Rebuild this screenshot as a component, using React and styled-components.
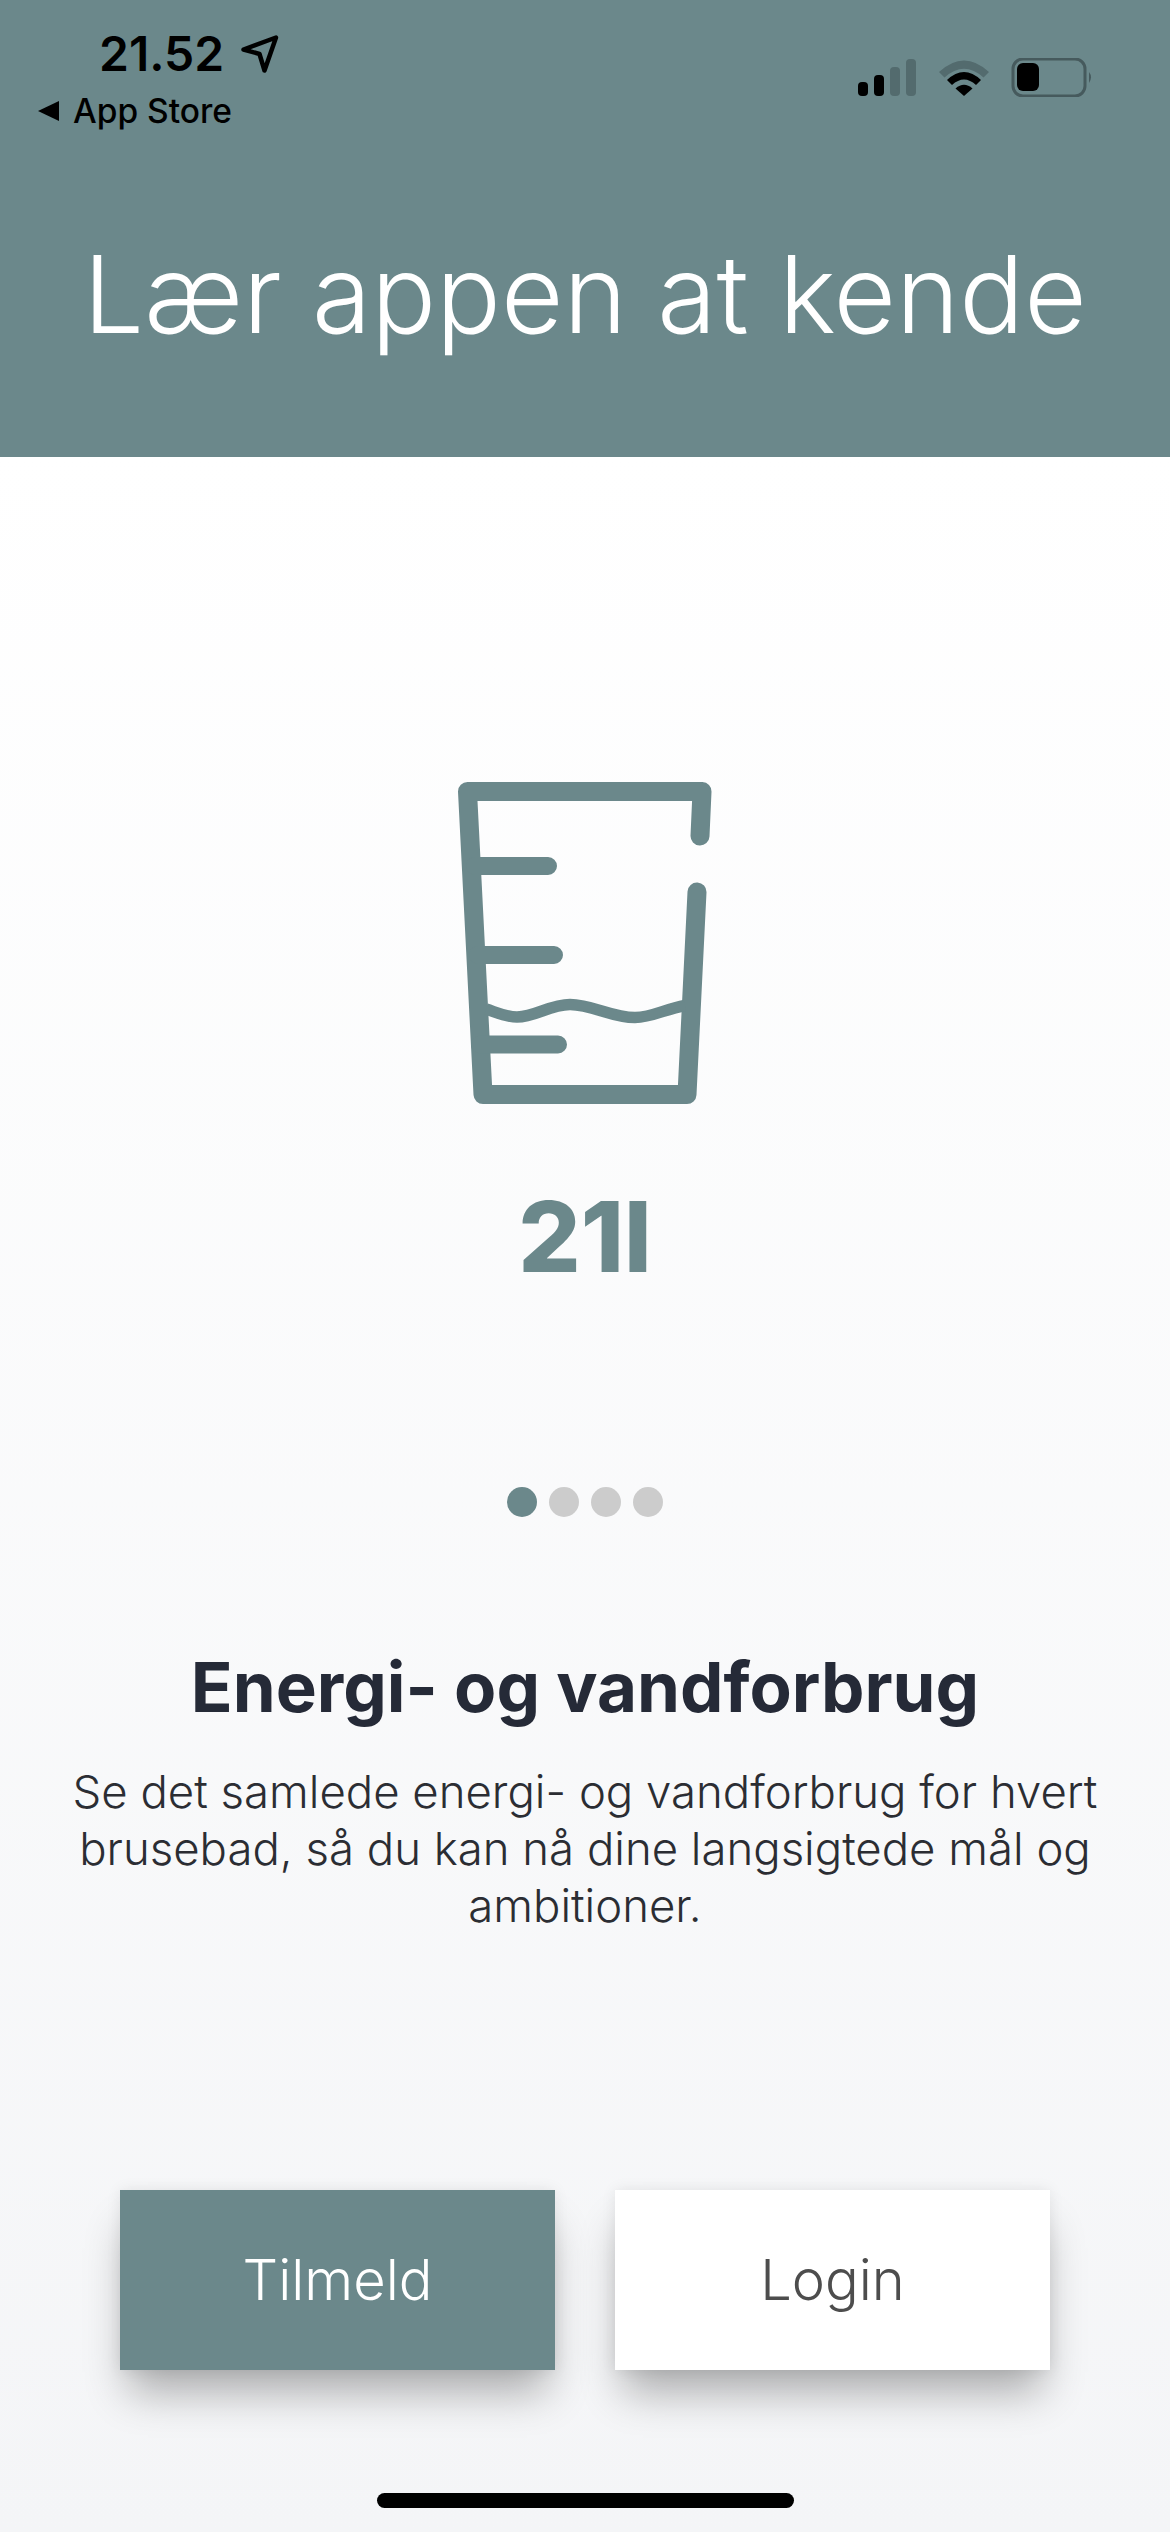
import React from "react";
import styled, { createGlobalStyle } from "styled-components";

const TEAL = "#6b888b";

const GlobalStyle = createGlobalStyle`
  html, body {
    margin: 0;
    padding: 0;
  }
  body {
    font-family: "Inter", "Liberation Sans", sans-serif;
    background: #f4f5f7;
  }
`;

const DOTS = [true, false, false, false];

export default function App() {
    return (
        <>
            <GlobalStyle />
            <Page>
                <Header>
                    <StatusBar>
                        <StatusLeft>
                            <TimeRow>
                                <Time>21.52</Time>
                                <LocationIcon viewBox="0 0 38 38">
                                    <path d="M2.5 14.5 L35 2.5 L23.5 35.5 L18.5 19 Z" fill="none" stroke="#000" strokeWidth="4.5" strokeLinejoin="round" />
                                </LocationIcon>
                            </TimeRow>
                            <BackRow>
                                <BackArrow viewBox="0 0 21 20">
                                    <path d="M0 10 L21 0 L21 20 Z" fill="#000" />
                                </BackArrow>
                                <BackLabel>App Store</BackLabel>
                            </BackRow>
                        </StatusLeft>
                        <StatusRight viewBox="0 0 235 39">
                            <rect x="1" y="24" width="10" height="14" rx="4" fill="#000" />
                            <rect x="17" y="17" width="10" height="21" rx="4" fill="#000" />
                            <rect x="33" y="9" width="10" height="29" rx="4" fill="#536b6e" />
                            <rect x="49" y="1" width="10" height="37" rx="4" fill="#536b6e" />
                            <path d="M82 14 Q107 -9 132 14 L126.5 19.5 Q107 2 87.5 19.5 Z" fill="#536b6e" />
                            <path d="M90 22 Q107 6 124 22 L119 27 Q107 16 95 27 Z" fill="#000" />
                            <path d="M98.5 30.5 Q107 23 115.5 30.5 L107 38 Z" fill="#000" />
                            <rect x="156" y="1" width="72" height="37" rx="10" fill="none" stroke="#465a5d" strokeWidth="3" />
                            <rect x="160" y="5" width="22" height="28" rx="6" fill="#000" />
                            <path d="M232 14 Q236 19 232 25 Z" fill="#465a5d" />
                        </StatusRight>
                    </StatusBar>
                    <Title>Lær appen at kende</Title>
                </Header>
                <Main>
                    <GlassIcon viewBox="0 0 330 380">
                        <g fill="none" stroke={TEAL} strokeLinecap="round" strokeLinejoin="round">
                            <path strokeWidth="19" d="M280 86 L282 41.5 L47.5 41.5 L63 344.5 L267 344.5 L277 142" />
                            <path strokeWidth="18" d="M55 116 L128 116 M58 205 L134 205 M60 294.5 L138 294.5" />
                            <path strokeWidth="11.5" strokeLinecap="butt" d="M66 259 C78 263 86 267 97 267 C115 267 130 254.5 150 254.5 C172 254.5 192 267.5 215 267.5 C232 267.5 245 259 265 255.5" />
                        </g>
                    </GlassIcon>
                    <Amount>21l</Amount>
                    <Dots>
                        {DOTS.map((active, index) => (
                            <Dot key={index} $active={active} />
                        ))}
                    </Dots>
                    <Heading>Energi- og vandforbrug</Heading>
                    <Body>
                        Se det samlede energi- og vandforbrug for hvert<br />
                        brusebad, så du kan nå dine langsigtede mål og<br />
                        ambitioner.
                    </Body>
                    <Buttons>
                        <Button $primary>Tilmeld</Button>
                        <Button>Login</Button>
                    </Buttons>
                    <HomeIndicator />
                </Main>
            </Page>
        </>
    );
}

const Page = styled.div`
    width: 1170px;
    height: 2532px;
    display: flex;
    flex-direction: column;
    overflow: hidden;
`;

const Header = styled.header`
    height: 457px;
    background: ${TEAL};
    display: flex;
    flex-direction: column;
    box-sizing: border-box;
`;

const StatusBar = styled.div`
    display: flex;
    justify-content: space-between;
    align-items: flex-start;
    padding: 29px 78px 0 38px;
    height: 101px;
`;

const StatusLeft = styled.div`
    display: flex;
    flex-direction: column;
`;

const TimeRow = styled.div`
    display: flex;
    align-items: center;
    gap: 17px;
    padding-left: 61px;
    height: 50px;
`;

const Time = styled.span`
    font-weight: 600;
    font-size: 48px;
    line-height: 50px;
    color: #000;
`;

const LocationIcon = styled.svg`
    width: 38px;
    height: 38px;
`;

const BackRow = styled.div`
    display: flex;
    align-items: center;
    gap: 14px;
    margin-top: 12px;
`;

const BackArrow = styled.svg`
    width: 21px;
    height: 20px;
`;

const BackLabel = styled.span`
    font-weight: 500;
    font-size: 33.5px;
    line-height: 40px;
    color: #000;
`;

const StatusRight = styled.svg`
    width: 235px;
    height: 39px;
    margin-top: 29px;
`;

const Title = styled.h1`
    margin: 0;
    padding-top: 101px;
    font-weight: 300;
    font-size: 107.8px;
    line-height: 126px;
    color: #fff;
    text-align: center;
`;

const Main = styled.main`
    flex: 1;
    display: flex;
    flex-direction: column;
    align-items: center;
    background: linear-gradient(#ffffff, #f4f5f7);
`;

const GlassIcon = styled.svg`
    width: 330px;
    height: 380px;
    margin-top: 293px;
`;

const Amount = styled.div`
    margin-top: 57px;
    font-weight: 800;
    font-size: 98px;
    line-height: 100px;
    color: ${TEAL};
`;

const Dots = styled.div`
    display: flex;
    gap: 12px;
    margin-top: 200px;
`;

const Dot = styled.span`
    width: 30px;
    height: 30px;
    border-radius: 50%;
    background: ${(props) => (props.$active ? TEAL : "#cccccc")};
`;

const Heading = styled.h2`
    margin: 128px 0 0;
    font-weight: 700;
    font-size: 69px;
    line-height: 84px;
    color: #252a37;
`;

const Body = styled.p`
    margin: 34px 0 0;
    font-weight: 300;
    font-size: 45.5px;
    line-height: 57px;
    color: #2b2d33;
    text-align: center;
`;

const Buttons = styled.div`
    display: flex;
    gap: 60px;
    margin-top: 256px;
`;

const Button = styled.button`
    width: 435px;
    height: 180px;
    border: 0;
    padding: 0;
    font-family: inherit;
    font-weight: 300;
    font-size: 56px;
    color: ${(props) => (props.$primary ? "#fff" : "#4d4d4d")};
    background: ${(props) => (props.$primary ? TEAL : "#fff")};
    box-shadow: 0 30px 40px -8px rgba(0, 0, 0, 0.3), 0 0 14px rgba(0, 0, 0, 0.08);
`;

const HomeIndicator = styled.div`
    width: 417px;
    height: 15px;
    border-radius: 8px;
    background: #000;
    margin-top: 123px;
`;
